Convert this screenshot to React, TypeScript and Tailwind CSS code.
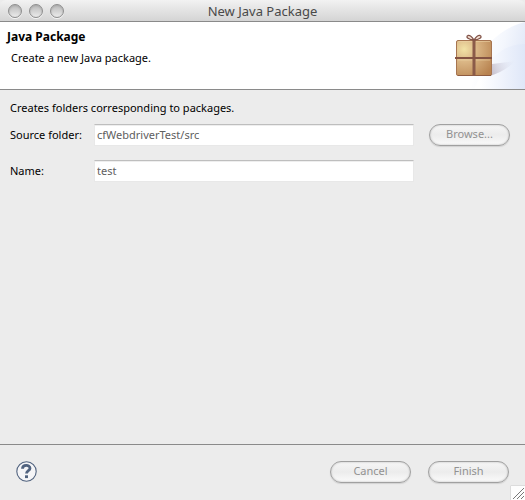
import React from "react";

function PushButton({ children }: { children: React.ReactNode }) {
  return (
    <button
      type="button"
      className="flex h-[22px] w-[81px] shrink-0 items-center justify-center rounded-full border border-[#a0a0a0] bg-linear-to-b from-[#f6f6f6] via-[#ececec] to-[#fafafa] pb-0.5 text-[11px] leading-4 text-[#929292] shadow-[inset_0_0_2px_#b4b4b4,0_1px_1px_#d2d2d2]"
    >
      {children}
    </button>
  );
}

function WindowButton({ label }: { label: string }) {
  return (
    <button
      type="button"
      aria-label={label}
      className="size-[14px] rounded-full border border-[#8e8e8e] bg-linear-to-b from-[#bcbcbc] via-[#d2d2d2] to-[#ededed] shadow-[inset_0_1px_2px_#a8a8a8,0_1px_0_#f5f5f5]"
    />
  );
}

function Field({ id, label, value, children }: { id: string; label: string; value: string; children?: React.ReactNode }) {
  return (
    <div className="flex h-[22px] items-center">
      <label htmlFor={id} className="w-[84px] shrink-0">
        {label}
      </label>
      <input
        id={id}
        type="text"
        defaultValue={value}
        className="h-[22px] min-w-0 flex-1 border border-[#e8e8e8] border-t-[#bebebe] bg-white px-0.5 pb-0.5 text-[11px] leading-4 text-[#606060] shadow-[inset_0_1px_0_#eeeeee] outline-none"
      />
      <div className="ml-[15px] w-[81px] shrink-0">{children}</div>
    </div>
  );
}

function PackageArt() {
  return (
    <svg viewBox="0 0 85 67" className="h-[67px] w-[85px] shrink-0" aria-hidden="true">
      <defs>
        <linearGradient id="sweep" gradientUnits="userSpaceOnUse" x1="40" y1="20" x2="85" y2="30">
          <stop offset="0" stopColor="#ffffff" />
          <stop offset="0.5" stopColor="#f4f7fd" />
          <stop offset="1" stopColor="#e2e9f8" />
        </linearGradient>
        <linearGradient id="sweepLow" gradientUnits="userSpaceOnUse" x1="40" y1="50" x2="85" y2="50">
          <stop offset="0" stopColor="#ffffff" />
          <stop offset="0.5" stopColor="#eff3fc" />
          <stop offset="1" stopColor="#dfe7f8" />
        </linearGradient>
        <linearGradient id="shade" gradientUnits="userSpaceOnUse" x1="48" y1="50" x2="76" y2="40">
          <stop offset="0" stopColor="#b0a5b4" />
          <stop offset="1" stopColor="#dce3f4" stopOpacity="0" />
        </linearGradient>
        <radialGradient id="paper" cx="0.22" cy="0.25" r="0.95">
          <stop offset="0" stopColor="#f2e3a6" />
          <stop offset="0.35" stopColor="#dcb988" />
          <stop offset="1" stopColor="#b88350" />
        </radialGradient>
      </defs>
      <path d="M85 0C67 4 49 18 37 37L31 67H85Z" fill="url(#sweep)" />
      <path d="M85 22C65 22 52 34 42 50L34 67H85Z" fill="url(#sweepLow)" />
      <path d="M52 42L76 39C68 46 60 51 50 54H25Z" fill="url(#shade)" opacity="0.8" />
      <rect x="16.5" y="18.5" width="35" height="35" rx="1.5" fill="url(#paper)" stroke="#a77550" />
      <path d="M18.5 19.5H32M36 19.5H50M18 38H32M36 38H50" stroke="#efd7aa" strokeWidth="1" opacity="0.55" />
      <path d="M18 53.5H51" stroke="#8f5c40" strokeWidth="1" />
      <path d="M34 18V54" stroke="#8b5b49" strokeWidth="3" />
      <path d="M15 36H52" stroke="#845342" strokeWidth="2" />
      <path d="M34 18C29 18 25 15 28 13.5C30 13 32 15 34 18ZM34 18C39 18 43 15 40 13.5C38 13 36 15 34 18Z" fill="#f3dfd2" stroke="#815348" strokeWidth="1.3" />
    </svg>
  );
}

export default function App() {
  return (
    <div className="flex min-h-screen flex-col bg-[#ececec] font-['Noto_Sans','Open_Sans',sans-serif] text-[11px] leading-4 text-black">
      <div className="grid h-[22px] grid-cols-[1fr_auto_1fr] items-center rounded-t-md border-b border-[#8a8a8a] bg-linear-to-b from-[#f2f2f2] to-[#d4d4d4] px-2">
        <div className="flex gap-[7px]">
          <WindowButton label="Close" />
          <WindowButton label="Minimize" />
          <WindowButton label="Zoom" />
        </div>
        <div className="text-[13px] leading-5 text-[#494949]">New Java Package</div>
      </div>

      <header className="flex h-[68px] justify-between border-b border-[#8a8a8a] bg-white">
        <div className="pt-[7px] pl-[7px]">
          <h1 className="text-[12px] leading-4 font-bold">Java Package</h1>
          <p className="pt-[5px] pl-1">Create a new Java package.</p>
        </div>
        <PackageArt />
      </header>

      <main className="flex flex-1 flex-col px-[10px] pt-[10px] pr-[15px]">
        <p>Creates folders corresponding to packages.</p>
        <div className="flex flex-col gap-[14px] pt-2">
          <Field id="source" label="Source folder:" value="cfWebdriverTest/src">
            <PushButton>Browse...</PushButton>
          </Field>
          <Field id="name" label="Name:" value="test" />
        </div>
      </main>

      <footer className="relative flex h-14 items-center justify-between border-t border-[#8a8a8a] px-4 pb-0.5">
        <button type="button" aria-label="Help" className="size-[21px] text-[#51637f]">
          <svg viewBox="0 0 21 21" className="size-[21px]" fill="none" stroke="currentColor">
            <circle cx="10.5" cy="10.5" r="9.7" fill="#f5f5f7" strokeWidth="1.1" />
            <path d="M6.5 7.8C6.5 3.2 14 3.4 14 7.2C14 9.8 10.5 9.6 10.5 12.6" strokeWidth="2.8" />
            <path d="M9 15.7H12" strokeWidth="2.8" />
          </svg>
        </button>
        <div className="flex gap-[17px]">
          <PushButton>Cancel</PushButton>
          <PushButton>Finish</PushButton>
        </div>
        <svg viewBox="0 0 15 15" className="absolute right-0 bottom-0 size-[15px]" aria-hidden="true">
          <rect width="15" height="15" fill="#fdfdfd" />
          <path d="M0.5 15V0.5H15" fill="none" stroke="#dcdcdc" />
          <path d="M3 14L14 3M7 14L14 7M11 14L14 11" stroke="#777777" />
        </svg>
      </footer>
    </div>
  );
}
